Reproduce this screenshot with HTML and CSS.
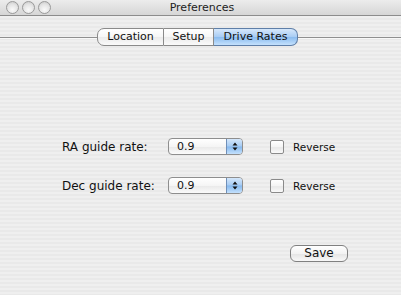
FILE: index.html
```html
<!DOCTYPE html>
<html>
<head>
<meta charset="utf-8">
<link rel="stylesheet" href="styles.css">
</head>
<body>
<div class="window">
  <div class="titlebar">
    <div class="lights">
      <span class="light"></span><span class="light"></span><span class="light"></span>
    </div>
    <div class="title">Preferences</div>
  </div>
  <div class="tabbar">
    <div class="tabline left"></div>
    <div class="tabs">
      <div class="tab first loc">Location</div>
      <div class="tab setup">Setup</div>
      <div class="tab last selected drive">Drive Rates</div>
    </div>
    <div class="tabline right"></div>
  </div>
  <div class="form">
    <div class="row">
      <div class="label">RA guide rate:</div>
      <div class="popup"><span class="val">0.9</span><span class="stepper"><svg width="6" height="9" viewBox="0 0 6 9"><path d="M3 0.5 L5.5 3.5 L0.5 3.5 Z M0.5 5.5 L5.5 5.5 L3 8.5 Z" fill="#111"/></svg></span></div>
      <span class="check"></span>
      <span class="checklabel">Reverse</span>
    </div>
    <div class="row">
      <div class="label">Dec guide rate:</div>
      <div class="popup"><span class="val">0.9</span><span class="stepper"><svg width="6" height="9" viewBox="0 0 6 9"><path d="M3 0.5 L5.5 3.5 L0.5 3.5 Z M0.5 5.5 L5.5 5.5 L3 8.5 Z" fill="#111"/></svg></span></div>
      <span class="check"></span>
      <span class="checklabel">Reverse</span>
    </div>
  </div>
  <div class="actions">
    <button class="btn">Save</button>
  </div>
</div>
</body>
</html>
```
FILE: styles.css
```css
html, body {
  margin: 0;
  padding: 0;
}
body {
  width: 401px;
  height: 295px;
  overflow: hidden;
  font-family: "DejaVu Sans", "Liberation Sans", sans-serif;
  font-size: 12px;
  color: #111;
}
.window {
  height: 295px;
  background: repeating-linear-gradient(to bottom, #efefef 0px, #efefef 2px, #e9e9e9 2px, #e9e9e9 4px);
}
.titlebar {
  height: 15px;
  border-bottom: 1px solid #8c8c8c;
  background: linear-gradient(to bottom, #ececec, #d6d6d6);
  display: flex;
  align-items: center;
}
.lights {
  display: flex;
  gap: 3px;
  padding-left: 6px;
}
.light {
  width: 11px;
  height: 11px;
  border-radius: 50%;
  border: 1px solid #9a9a9a;
  background: radial-gradient(circle at 50% 70%, #fafafa 0%, #e4e4e4 55%, #c4c4c4 100%);
}
.title {
  flex: 1;
  text-align: center;
  font-size: 11px;
  color: #222;
  margin-left: -48px;
  line-height: 15px;
}
.tabbar {
  margin-top: 12px;
  height: 18px;
  display: flex;
  align-items: center;
}
.tabline {
  height: 1px;
  background: #8f8f8f;
  box-shadow: 0 1px 0 #f8f8f8;
}
.tabline.left { width: 97px; }
.tabline.right { flex: 1; }
.tabs {
  display: flex;
  height: 18px;
}
.tab {
  box-sizing: border-box;
  height: 18px;
  line-height: 16px;
  text-align: center;
  font-size: 11px;
  border: 1px solid #8a8a8a;
  border-left: none;
  background: linear-gradient(to bottom, #ffffff 0%, #f6f6f6 50%, #ebebeb 52%, #fafafa 100%);
}
.tab.first {
  border-left: 1px solid #8a8a8a;
  border-radius: 7px 0 0 7px;
}
.tab.last {
  border-radius: 0 7px 7px 0;
}
.tab.loc { width: 67px; }
.tab.setup { width: 50px; }
.tab.drive { width: 84px; }
.tab.selected {
  border-color: #5f7fa8;
  background: linear-gradient(to bottom, #d6e8fb 0%, #a9cdf4 48%, #8bbcef 52%, #c4e1fd 100%);
}
.form {
  margin-top: 92px;
  padding-left: 62px;
  display: flex;
  flex-direction: column;
  gap: 22px;
}
.row {
  display: flex;
  align-items: center;
  height: 17px;
}
.label {
  width: 106px;
}
.popup {
  box-sizing: border-box;
  width: 75px;
  height: 17px;
  border: 1px solid #8e8e8e;
  border-radius: 4px;
  display: flex;
  overflow: hidden;
  background: linear-gradient(to bottom, #ffffff 0%, #f5f5f5 50%, #eaeaea 55%, #fbfbfb 100%);
}
.val {
  flex: 1;
  padding-left: 8px;
  line-height: 15px;
  font-size: 11px;
}
.stepper {
  width: 15px;
  border-left: 1px solid #6f8fb8;
  background: linear-gradient(to bottom, #d4e7fb 0%, #a6cbf3 48%, #85b8ee 52%, #c4e1fd 100%);
  display: flex;
  align-items: center;
  justify-content: center;
}
.check {
  box-sizing: border-box;
  width: 14px;
  height: 14px;
  margin-left: 27px;
  border: 1px solid #8a8a8a;
  border-radius: 2px;
  background: linear-gradient(to bottom, #ffffff 0%, #f4f4f4 50%, #e8e8e8 55%, #fafafa 100%);
}
.checklabel {
  margin-left: 9px;
  font-size: 10.5px;
}
.actions {
  margin-top: 51px;
  padding-left: 290px;
}
.btn {
  box-sizing: border-box;
  width: 58px;
  height: 17px;
  padding: 0;
  font-family: "DejaVu Sans", sans-serif;
  font-size: 12px;
  color: #111;
  border: 1px solid #808080;
  border-radius: 6px;
  background: linear-gradient(to bottom, #ffffff 0%, #f3f3f3 50%, #e6e6e6 55%, #f8f8f8 100%);
  line-height: 15px;
}
```
